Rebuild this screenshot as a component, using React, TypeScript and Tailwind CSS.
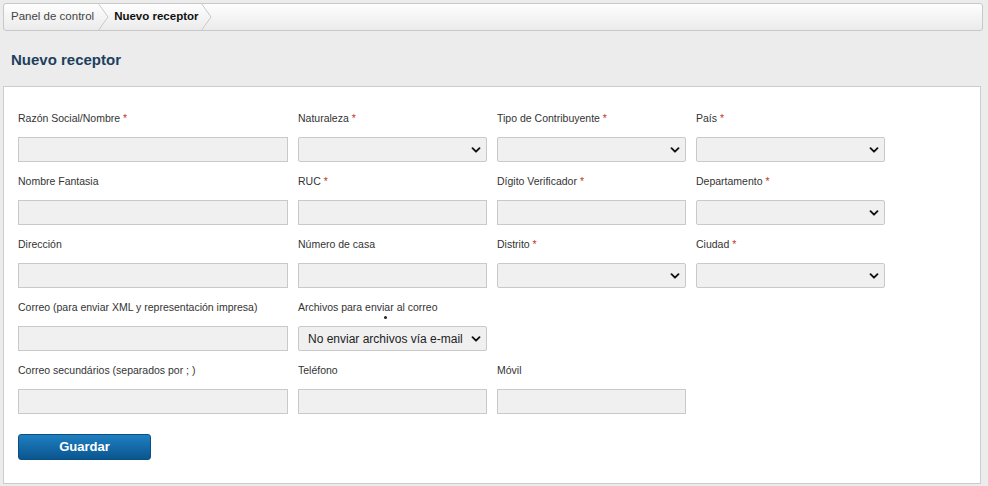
import React from 'react';

type Field = {
  label: string;
  required?: boolean;
  kind: 'input' | 'select' | 'empty';
  value?: string;
  dot?: boolean;
};

const rows: Field[][] = [
  [
    { label: 'Razón Social/Nombre', required: true, kind: 'input' },
    { label: 'Naturaleza', required: true, kind: 'select' },
    { label: 'Tipo de Contribuyente', required: true, kind: 'select' },
    { label: 'País', required: true, kind: 'select' },
  ],
  [
    { label: 'Nombre Fantasia', kind: 'input' },
    { label: 'RUC', required: true, kind: 'input' },
    { label: 'Dígito Verificador', required: true, kind: 'input' },
    { label: 'Departamento', required: true, kind: 'select' },
  ],
  [
    { label: 'Dirección', kind: 'input' },
    { label: 'Número de casa', kind: 'input' },
    { label: 'Distrito', required: true, kind: 'select' },
    { label: 'Ciudad', required: true, kind: 'select' },
  ],
  [
    { label: 'Correo (para enviar XML y representación impresa)', kind: 'input' },
    { label: 'Archivos para enviar al correo', kind: 'select', value: 'No enviar archivos vía e-mail', dot: true },
    { label: '', kind: 'empty' },
    { label: '', kind: 'empty' },
  ],
  [
    { label: 'Correo secundários (separados por ; )', kind: 'input' },
    { label: 'Teléfono', kind: 'input' },
    { label: 'Móvil', kind: 'input' },
    { label: '', kind: 'empty' },
  ],
];

const Chevron = () => (
  <svg className="pointer-events-none absolute right-[6px] top-1/2 h-[10px] w-[10px] -translate-y-1/2" viewBox="0 0 10 10" fill="none">
    <path d="M1.5 3.2 L5 6.7 L8.5 3.2" stroke="#111" strokeWidth="1.9" strokeLinecap="round" strokeLinejoin="round" />
  </svg>
);

const Crumb = () => (
  <svg className="h-[28px] w-[12px] shrink-0" viewBox="0 0 12 28" fill="none">
    <path d="M1 0 L11 14 L1 28" stroke="#c9c9c9" strokeWidth="1" />
  </svg>
);

const FieldBox: React.FC<{ f: Field }> = ({ f }) => {
  if (f.kind === 'empty') return <div />;
  return (
    <div className="flex flex-col">
      <div className="relative h-[16px] text-[10.5px] leading-[16px] text-[#333]">
        {f.label}
        {f.required && <span className="text-[#c0392b]"> *</span>}
        {f.dot && <span className="absolute left-[86px] top-[17px] h-[3px] w-[3px] rounded-full bg-[#222]" />}
      </div>
      <div className="relative mt-[11px] h-[25px]">
        {f.kind === 'input' ? (
          <input className="h-full w-full border border-[#c9c9c9] bg-[#f0f0f0] px-2 outline-none" />
        ) : (
          <>
            <div className="flex h-full w-full items-center rounded-[2px] border border-[#c9c9c9] bg-[#f0f0f0] pl-[9px] text-[12px] text-[#222]">
              {f.value}
            </div>
            <Chevron />
          </>
        )}
      </div>
    </div>
  );
};

export default function App() {
  return (
    <div className="min-h-[486px] bg-[#ececec] px-[3px] pt-[3px] pb-[2px]" style={{ fontFamily: '"Liberation Sans", Arial, sans-serif' }}>
      <div className="flex h-[28px] w-[980px] items-center rounded-[3px] border border-[#c8c8c8] bg-gradient-to-b from-[#fefefe] to-[#ebebeb] text-[11.5px]">
        <span className="pl-[7px] pr-[3px] text-[#444]">Panel de control</span>
        <Crumb />
        <span className="pl-[5px] pr-[2px] font-bold text-[#111]">Nuevo receptor</span>
        <Crumb />
      </div>

      <h1 className="mt-[20px] pl-[8px] text-[15px] font-bold leading-[18px] text-[#1d3f5e]">Nuevo receptor</h1>

      <div className="mt-[17px] h-[398px] w-[978px] border border-[#cccccc] bg-white pl-[14px] pt-[23px]">
        <div className="flex flex-col gap-y-[11px]">
          {rows.map((row, i) => (
            <div key={i} className="grid grid-cols-[270px_189px_189px_189px] gap-x-[10px]">
              {row.map((f, j) => (
                <FieldBox key={j} f={f} />
              ))}
            </div>
          ))}
        </div>
        <button className="mt-[20px] h-[26px] w-[133px] rounded-[3px] border border-[#0b4f82] bg-gradient-to-b from-[#1f7fc0] to-[#0a5690] text-[13px] font-bold text-white">
          Guardar
        </button>
      </div>
    </div>
  );
}
